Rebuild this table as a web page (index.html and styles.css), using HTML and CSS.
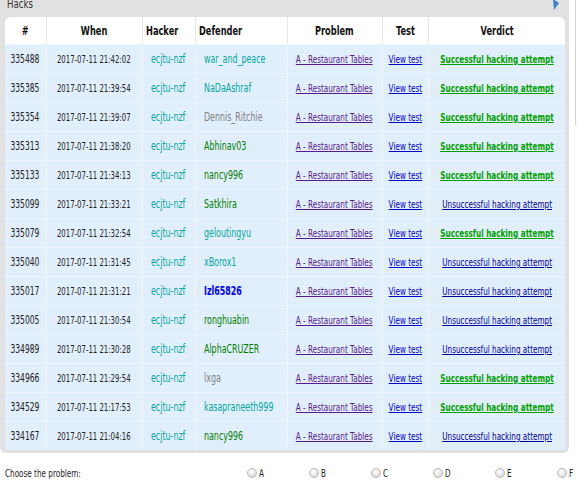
FILE: index.html
```html
<!DOCTYPE html>
<html>
<head>
<meta charset="utf-8">
<link rel="stylesheet" href="styles.css">
</head>
<body>
<div class="sidebar-edge"></div>
<div class="datatable">
  <div class="caption"><span class="s">Hacks</span></div>
  <svg class="toggle" width="8" height="11" viewBox="0 0 8 11"><path d="M1 0 L7 4 L2 11 Z" fill="#3b7fd0"/></svg>
  <table class="hacks">
    <colgroup>
      <col class="c-id"><col class="c-when"><col class="c-hacker"><col class="c-def"><col class="c-prob"><col class="c-test"><col class="c-verdict">
    </colgroup>
    <thead>
      <tr><th><span class="s">#</span></th><th><span class="s">When</span></th><th class="left"><span class="s">Hacker</span></th><th class="left"><span class="s">Defender</span></th><th><span class="s">Problem</span></th><th><span class="s">Test</span></th><th><span class="s">Verdict</span></th></tr>
    </thead>
    <tbody>
      <tr><td><span class="s">335488</span></td><td class="when"><span class="s">2017-07-11 21:42:02</span></td><td class="user cyan"><span class="s">ecjtu-nzf</span></td><td class="user cyan"><span class="s">war_and_peace</span></td><td><a class="s prob" href="#">A - Restaurant Tables</a></td><td><a class="s test" href="#">View test</a></td><td><a class="s ok" href="#">Successful hacking attempt</a></td></tr>
      <tr><td><span class="s">335385</span></td><td class="when"><span class="s">2017-07-11 21:39:54</span></td><td class="user cyan"><span class="s">ecjtu-nzf</span></td><td class="user cyan"><span class="s">NaDaAshraf</span></td><td><a class="s prob" href="#">A - Restaurant Tables</a></td><td><a class="s test" href="#">View test</a></td><td><a class="s ok" href="#">Successful hacking attempt</a></td></tr>
      <tr><td><span class="s">335354</span></td><td class="when"><span class="s">2017-07-11 21:39:07</span></td><td class="user cyan"><span class="s">ecjtu-nzf</span></td><td class="user gray"><span class="s">Dennis_Ritchie</span></td><td><a class="s prob" href="#">A - Restaurant Tables</a></td><td><a class="s test" href="#">View test</a></td><td><a class="s ok" href="#">Successful hacking attempt</a></td></tr>
      <tr><td><span class="s">335313</span></td><td class="when"><span class="s">2017-07-11 21:38:20</span></td><td class="user cyan"><span class="s">ecjtu-nzf</span></td><td class="user green"><span class="s">Abhinav03</span></td><td><a class="s prob" href="#">A - Restaurant Tables</a></td><td><a class="s test" href="#">View test</a></td><td><a class="s ok" href="#">Successful hacking attempt</a></td></tr>
      <tr><td><span class="s">335133</span></td><td class="when"><span class="s">2017-07-11 21:34:13</span></td><td class="user cyan"><span class="s">ecjtu-nzf</span></td><td class="user green"><span class="s">nancy996</span></td><td><a class="s prob" href="#">A - Restaurant Tables</a></td><td><a class="s test" href="#">View test</a></td><td><a class="s ok" href="#">Successful hacking attempt</a></td></tr>
      <tr><td><span class="s">335099</span></td><td class="when"><span class="s">2017-07-11 21:33:21</span></td><td class="user cyan"><span class="s">ecjtu-nzf</span></td><td class="user green"><span class="s">Satkhira</span></td><td><a class="s prob" href="#">A - Restaurant Tables</a></td><td><a class="s test" href="#">View test</a></td><td><a class="s fail" href="#">Unsuccessful hacking attempt</a></td></tr>
      <tr><td><span class="s">335079</span></td><td class="when"><span class="s">2017-07-11 21:32:54</span></td><td class="user cyan"><span class="s">ecjtu-nzf</span></td><td class="user cyan"><span class="s">geloutingyu</span></td><td><a class="s prob" href="#">A - Restaurant Tables</a></td><td><a class="s test" href="#">View test</a></td><td><a class="s ok" href="#">Successful hacking attempt</a></td></tr>
      <tr><td><span class="s">335040</span></td><td class="when"><span class="s">2017-07-11 21:31:45</span></td><td class="user cyan"><span class="s">ecjtu-nzf</span></td><td class="user cyan"><span class="s">xBorox1</span></td><td><a class="s prob" href="#">A - Restaurant Tables</a></td><td><a class="s test" href="#">View test</a></td><td><a class="s fail" href="#">Unsuccessful hacking attempt</a></td></tr>
      <tr><td><span class="s">335017</span></td><td class="when"><span class="s">2017-07-11 21:31:21</span></td><td class="user cyan"><span class="s">ecjtu-nzf</span></td><td class="user blue"><span class="s">Izl65826</span></td><td><a class="s prob" href="#">A - Restaurant Tables</a></td><td><a class="s test" href="#">View test</a></td><td><a class="s fail" href="#">Unsuccessful hacking attempt</a></td></tr>
      <tr><td><span class="s">335005</span></td><td class="when"><span class="s">2017-07-11 21:30:54</span></td><td class="user cyan"><span class="s">ecjtu-nzf</span></td><td class="user green"><span class="s">ronghuabin</span></td><td><a class="s prob" href="#">A - Restaurant Tables</a></td><td><a class="s test" href="#">View test</a></td><td><a class="s fail" href="#">Unsuccessful hacking attempt</a></td></tr>
      <tr><td><span class="s">334989</span></td><td class="when"><span class="s">2017-07-11 21:30:28</span></td><td class="user cyan"><span class="s">ecjtu-nzf</span></td><td class="user green"><span class="s">AlphaCRUZER</span></td><td><a class="s prob" href="#">A - Restaurant Tables</a></td><td><a class="s test" href="#">View test</a></td><td><a class="s fail" href="#">Unsuccessful hacking attempt</a></td></tr>
      <tr><td><span class="s">334966</span></td><td class="when"><span class="s">2017-07-11 21:29:54</span></td><td class="user cyan"><span class="s">ecjtu-nzf</span></td><td class="user gray"><span class="s">lxga</span></td><td><a class="s prob" href="#">A - Restaurant Tables</a></td><td><a class="s test" href="#">View test</a></td><td><a class="s ok" href="#">Successful hacking attempt</a></td></tr>
      <tr><td><span class="s">334529</span></td><td class="when"><span class="s">2017-07-11 21:17:53</span></td><td class="user cyan"><span class="s">ecjtu-nzf</span></td><td class="user cyan"><span class="s">kasapraneeth999</span></td><td><a class="s prob" href="#">A - Restaurant Tables</a></td><td><a class="s test" href="#">View test</a></td><td><a class="s ok" href="#">Successful hacking attempt</a></td></tr>
      <tr><td><span class="s">334167</span></td><td class="when"><span class="s">2017-07-11 21:04:16</span></td><td class="user cyan"><span class="s">ecjtu-nzf</span></td><td class="user green"><span class="s">nancy996</span></td><td><a class="s prob" href="#">A - Restaurant Tables</a></td><td><a class="s test" href="#">View test</a></td><td><a class="s fail" href="#">Unsuccessful hacking attempt</a></td></tr>
    </tbody>
  </table>
</div>
<div class="chooser">
  <span class="label"><span class="s">Choose the problem:</span></span>
  <div class="options">
    <label class="opt"><span class="radio"></span><span class="s">A</span></label>
    <label class="opt"><span class="radio"></span><span class="s">B</span></label>
    <label class="opt"><span class="radio"></span><span class="s">C</span></label>
    <label class="opt"><span class="radio"></span><span class="s">D</span></label>
    <label class="opt"><span class="radio"></span><span class="s">E</span></label>
    <label class="opt"><span class="radio"></span><span class="s">F</span></label>
  </div>
</div>
</body>
</html>
```
FILE: styles.css
```css
html, body {
  margin: 0;
  padding: 0;
  background: #fff;
}
body {
  position: relative;
  width: 577px;
  height: 494px;
  overflow: hidden;
  font-family: "DejaVu Sans", Verdana, sans-serif;
  color: #222;
}
.s {
  display: inline-block;
  transform: scaleX(0.66);
  margin: 0 -100px;
}
.sidebar-edge {
  position: absolute;
  left: 575px;
  top: 0;
  width: 2px;
  height: 125px;
  border-left: 1px solid #d4d4d4;
  border-bottom: 1px solid #d4d4d4;
  border-bottom-left-radius: 2px;
}
.datatable {
  position: relative;
  width: 569px;
  background: #e1e1e1;
  padding: 0 4px 3px 5px;
  box-sizing: border-box;
  border-radius: 0 0 6px 6px;
}
.caption {
  height: 18px;
  font-size: 13px;
  line-height: 10px;
  margin-top: -1px;
  color: #333;
  padding-left: 2px;
}
.caption .s, .left .s, .user .s, .label .s, .opt .s {
  margin: 0;
  transform-origin: 0 50%;
}
.toggle {
  position: absolute;
  right: 9px;
  top: 0;
}
.hacks {
  width: 560px;
  border-collapse: collapse;
  table-layout: fixed;
  background: #fff;
  border-radius: 6px 6px 0 0;
}
.c-id { width: 41px; }
.c-when { width: 96px; }
.c-hacker { width: 53px; }
.c-def { width: 92px; }
.c-prob { width: 95px; }
.c-test { width: 46px; }
.c-verdict { width: 137px; }
.hacks th {
  height: 27px;
  font-size: 12.5px;
  font-weight: bold;
  color: #111;
  text-align: center;
  border-left: 1px solid #e8e8e8;
  padding: 0;
  white-space: nowrap;
}
.hacks th:first-child { border-left: none; border-top-left-radius: 6px; }
.hacks th:last-child { border-top-right-radius: 6px; }
.hacks th.left { text-align: left; padding-left: 3px; }
.hacks td {
  height: 28px;
  background: #e1eefc;
  border-top: 1px solid #eef4fc;
  border-left: 1px solid #f2f6fc;
  padding: 0;
  text-align: center;
  font-size: 11.5px;
  white-space: nowrap;
  color: #222;
}
.hacks td:first-child { border-left: none; }
.hacks td.when { font-size: 10.5px; }
.hacks td.user { text-align: left; padding-left: 8px; font-size: 12px; }
.cyan { color: #03a89e !important; }
.gray { color: #808080 !important; }
.green { color: #008000 !important; }
.blue { color: #0000ff !important; font-weight: bold; }
.hacks a { font-size: 11px; text-decoration: underline; }
.prob { color: #551a8b; }
.test { color: #0000cc; }
.ok { color: #00a000; font-weight: bold; text-decoration-color: #003080; }
.fail { color: #0000a0; }
.chooser {
  display: flex;
  align-items: center;
  height: 40px;
  padding-left: 5px;
  font-size: 11px;
  color: #222;
}
.chooser .label { width: 242px; flex-shrink: 0; }
.options {
  display: flex;
}
.opt {
  width: 62px;
  flex-shrink: 0;
  display: flex;
  align-items: center;
  gap: 2px;
}
.opt:last-child { width: auto; }
.radio {
  width: 8px;
  height: 8px;
  border-radius: 50%;
  border: 1px solid #b8b8b8;
  background: radial-gradient(circle at 40% 35%, #fff, #d0d0d0);
}
```
